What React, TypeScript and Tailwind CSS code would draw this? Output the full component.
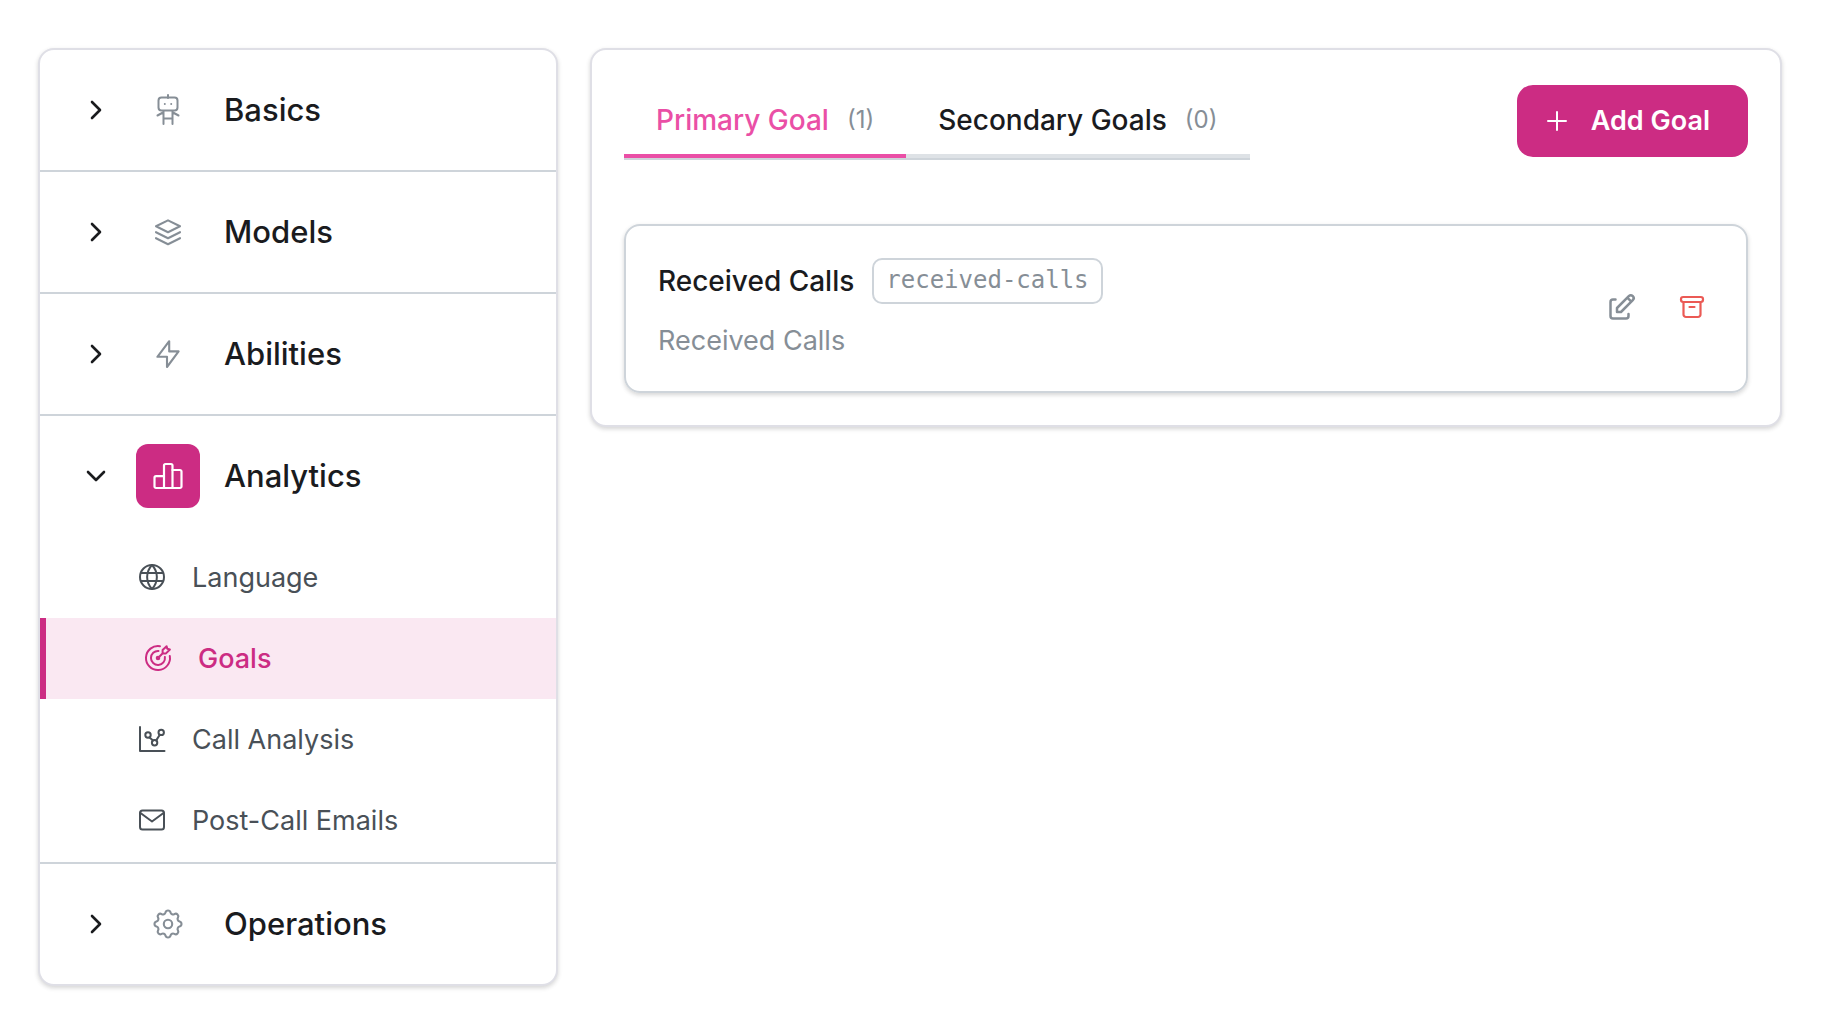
import { useState } from 'react';
import type { ReactNode } from 'react';

function Icon({ className, width = 2, box = 32, children }: { className: string; width?: number; box?: number; children: ReactNode }) {
  return (
    <svg
      className={className}
      viewBox={`0 0 ${box} ${box}`}
      fill="none"
      stroke="currentColor"
      strokeWidth={width}
      strokeLinecap="round"
      strokeLinejoin="round"
      aria-hidden="true"
    >
      {children}
    </svg>
  );
}

const RobotIcon = () => (
  <Icon className="size-8">
    <path d="M16 1v3M11.500 17v13M20.500 17v13M11.500 24.500h9M11 18.500L5.500 21.500M21 18.500l5.500 3" />
    <rect x="6.500" y="3.500" width="19" height="13" rx="3" />
    <path d="M12.800 10h.01M19.200 10h.01" />
  </Icon>
);

const LayersIcon = () => (
  <Icon className="size-8" width={2.1}>
    <path d="M16 4.400L28 10.300L16 16.200L4 10.300Z" />
    <path d="M4 16.200l12 6l12-6M4 22.200l12 6l12-6" />
  </Icon>
);

const BoltIcon = () => (
  <Icon className="size-8" width={2.1}>
    <path d="M17.200 3.200L5.400 18.800h9.600v10.200L26.600 13.400h-9.400z" />
  </Icon>
);

const BarsIcon = () => (
  <Icon className="size-8" width={2.2}>
    <path d="M12 28V5.500a1.500 1.500 0 0 1 1.500-1.500h5.500a1.500 1.500 0 0 1 1.500 1.500V28" />
    <path d="M12 16.200H4a1.500 1.500 0 0 0-1.500 1.500v8.800A1.500 1.500 0 0 0 4 28h24a1.500 1.500 0 0 0 1.500-1.500V11.500a1.500 1.500 0 0 0-1.500-1.500h-7.500" />
  </Icon>
);

const CogIcon = () => (
  <Icon className="size-9" width={1.4} box={24}>
    <path d="M10.325 4.317c.426-1.756 2.924-1.756 3.350 0a1.724 1.724 0 0 0 2.573 1.066c1.543-.94 3.310.826 2.370 2.370a1.724 1.724 0 0 0 1.065 2.572c1.756.426 1.756 2.924 0 3.350a1.724 1.724 0 0 0-1.066 2.573c.94 1.543-.826 3.310-2.370 2.370a1.724 1.724 0 0 0-2.572 1.065c-.426 1.756-2.924 1.756-3.350 0a1.724 1.724 0 0 0-2.573-1.066c-1.543.94-3.310-.826-2.370-2.370a1.724 1.724 0 0 0-1.065-2.572c-1.756-.426-1.756-2.924 0-3.350a1.724 1.724 0 0 0 1.066-2.573c-.94-1.543.826-3.310 2.370-2.370.996.608 2.296.07 2.572-1.065z" />
    <circle cx="12" cy="12" r="2.800" />
  </Icon>
);

const GlobeIcon = () => (
  <Icon className="size-7" box={28} width={2}>
    <circle cx="14" cy="14" r="12" />
    <path d="M3 10h22M3 18h22M14 2C7.500 9 7.500 19 14 26M14 2c6.500 7 6.500 17 0 24" />
  </Icon>
);

const TargetIcon = () => (
  <Icon className="size-7" box={28} width={2}>
    <path d="M16 2.200A12 12 0 1 0 25.800 12" />
    <path d="M14.500 7A7 7 0 1 0 20.900 13" />
    <circle cx="14" cy="14" r="1.300" fill="currentColor" />
    <path d="M14 14l5-5M18.600 9.400V6l4-3.800.7 2.600 2.600.7-3.900 3.900z" />
  </Icon>
);

const NodesIcon = () => (
  <Icon className="size-7" box={28} width={2}>
    <path d="M2 2v24h24.500" />
    <circle cx="10" cy="10" r="2.700" />
    <circle cx="23.200" cy="7.400" r="2.700" />
    <circle cx="16.600" cy="17.800" r="2.700" />
    <path d="M11.500 12.400l3.600 3M18.200 15.400l3.600-5.600" />
  </Icon>
);

const MailIcon = () => (
  <Icon className="size-7" box={28} width={2}>
    <rect x="2" y="4.500" width="24" height="19" rx="2.500" />
    <path d="M2.500 7L14 15.500L25.500 7" />
  </Icon>
);

const EditIcon = () => (
  <Icon className="size-8" width={2.5}>
    <path d="M9.500 8.500H7a2.500 2.500 0 0 0-2.500 2.500v14A2.500 2.500 0 0 0 7 27.500h13a2.500 2.500 0 0 0 2.500-2.500v-2" />
    <path d="M11 21h4L26.800 9.200a2.700 2.700 0 0 0-4-4L11 17zM21.300 6.700l4 4" />
  </Icon>
);

const ArchiveIcon = () => (
  <Icon className="size-8" width={2.2}>
    <rect x="5" y="6" width="22" height="5" rx="2.200" />
    <path d="M7.500 11v12.500A2.500 2.500 0 0 0 10 26h12a2.500 2.500 0 0 0 2.500-2.500V11M13.500 16h5" />
  </Icon>
);

function Chevron({ open }: { open: boolean }) {
  return (
    <Icon className="size-8 shrink-0" width={2.6}>
      <path d={open ? 'M8 12L16 20L24 12' : 'M12 8L20 16L12 24'} />
    </Icon>
  );
}

const sections = [
  { id: 'basics', label: 'Basics', icon: <RobotIcon />, items: [] },
  { id: 'models', label: 'Models', icon: <LayersIcon />, items: [] },
  { id: 'abilities', label: 'Abilities', icon: <BoltIcon />, items: [] },
  {
    id: 'analytics',
    label: 'Analytics',
    icon: <BarsIcon />,
    items: [
      { id: 'language', label: 'Language', icon: <GlobeIcon /> },
      { id: 'goals', label: 'Goals', icon: <TargetIcon /> },
      { id: 'call-analysis', label: 'Call Analysis', icon: <NodesIcon /> },
      { id: 'emails', label: 'Post-Call Emails', icon: <MailIcon /> },
    ],
  },
  { id: 'operations', label: 'Operations', icon: <CogIcon />, items: [] },
];

const tabs = [
  { id: 'primary', label: 'Primary Goal', count: 1 },
  { id: 'secondary', label: 'Secondary Goals', count: 0 },
];

const goals = [{ slug: 'received-calls', name: 'Received Calls', description: 'Received Calls' }];

const card = 'rounded-2xl border-2 border-[#dfdfe6] bg-white shadow-[0_2px_4px_rgba(0,0,0,0.12),0_2px_6px_rgba(0,0,0,0.05)]';

function Sidebar() {
  const [open, setOpen] = useState('analytics');

  return (
    <nav className={`w-[520px] shrink-0 overflow-hidden ${card}`}>
      {sections.map((section) => {
        const isOpen = section.id === open;
        return (
          <div key={section.id} className="border-b-2 border-[#ced4da] last:border-b-0">
            <button
              type="button"
              aria-expanded={isOpen}
              onClick={() => setOpen(isOpen ? '' : section.id)}
              className="flex h-[120px] w-full items-center gap-6 pl-10 text-left text-[31px] font-medium text-[#1a1b1e]"
            >
              <Chevron open={isOpen} />
              <span
                className={`flex size-16 items-center justify-center rounded-xl ${isOpen ? 'bg-[#cc2c83] text-white' : 'text-[#868e96]'}`}
              >
                {section.icon}
              </span>
              {section.label}
            </button>
            {isOpen && section.items.length > 0 && (
              <ul className="py-px">
                {section.items.map((item) => (
                  <li key={item.id}>
                    <a
                      href={`#${item.id}`}
                      className={`flex h-[81px] items-center gap-[26px] pl-[98px] text-[27px] ${
                        item.id === 'goals' ? 'border-l-6 border-[#cc2c83] bg-[#fae8f2] font-medium text-[#cc2c83]' : 'text-[#495057]'
                      }`}
                    >
                      <span className="pb-0.5">{item.icon}</span>
                      <span className="pt-0.5">{item.label}</span>
                    </a>
                  </li>
                ))}
              </ul>
            )}
          </div>
        );
      })}
    </nav>
  );
}

function GoalCard({ goal }: { goal: { slug: string; name: string; description: string } }) {
  return (
    <article className="flex items-center justify-between rounded-2xl border-2 border-[#ced4da] p-8 shadow-[0_2px_4px_rgba(0,0,0,0.12),0_2px_6px_rgba(0,0,0,0.05)]">
      <div>
        <div className="flex items-center gap-[18px]">
          <h3 className="text-[28px] font-medium text-[#1a1b1e]">{goal.name}</h3>
          <code className="flex h-[46px] items-center rounded-[10px] border-2 border-[#ced4da] px-3 pb-0.5 font-['DejaVu_Sans_Mono',monospace] text-[24px] text-[#868e96]">
            {goal.slug}
          </code>
        </div>
        <p className="mt-[18px] text-[27px] leading-[37px] text-[#868e96]">{goal.description}</p>
      </div>
      <div className="flex gap-[26px] pb-1">
        <button type="button" aria-label="Edit goal" className="flex size-11 items-center justify-center text-[#868e96]">
          <EditIcon />
        </button>
        <button type="button" aria-label="Archive goal" className="flex size-11 items-center justify-center text-[#eb5a55]">
          <ArchiveIcon />
        </button>
      </div>
    </article>
  );
}

function GoalsPanel() {
  const [active, setActive] = useState('primary');

  return (
    <main className={`min-w-0 flex-1 p-8 ${card}`}>
      <div className="mb-16 flex items-center justify-between">
        <div role="tablist" className="flex border-b-2 border-[#ced4da]">
          {tabs.map((tab) => (
            <button
              key={tab.id}
              type="button"
              role="tab"
              aria-selected={tab.id === active}
              onClick={() => setActive(tab.id)}
              className={`flex h-[76px] items-center gap-[18px] border-b-4 px-8 pt-1 text-[28px] font-medium whitespace-nowrap ${
                tab.id === active ? 'border-[#ea4fa6] text-[#ea4fa6]' : 'border-[#dee2e6] text-[#1a1b1e]'
              }`}
            >
              {tab.label}
              <span className="text-[24px] font-normal text-[#868e96]">({tab.count})</span>
            </button>
          ))}
        </div>
        <button
          type="button"
          className="flex h-[72px] items-center gap-[18px] rounded-2xl bg-[#cc2c83] pr-[38px] pl-6 text-[27px] font-semibold whitespace-nowrap text-white"
        >
          <Icon className="size-8">
            <path d="M16 7v18M7 16h18" />
          </Icon>
          Add Goal
        </button>
      </div>
      {goals.map((goal) => (
        <GoalCard key={goal.slug} goal={goal} />
      ))}
    </main>
  );
}

export default function App() {
  return (
    <div className="flex min-h-screen items-start gap-8 bg-white pt-12 pr-10 pb-11 pl-[38px] font-['Inter',sans-serif]">
      <Sidebar />
      <GoalsPanel />
    </div>
  );
}
